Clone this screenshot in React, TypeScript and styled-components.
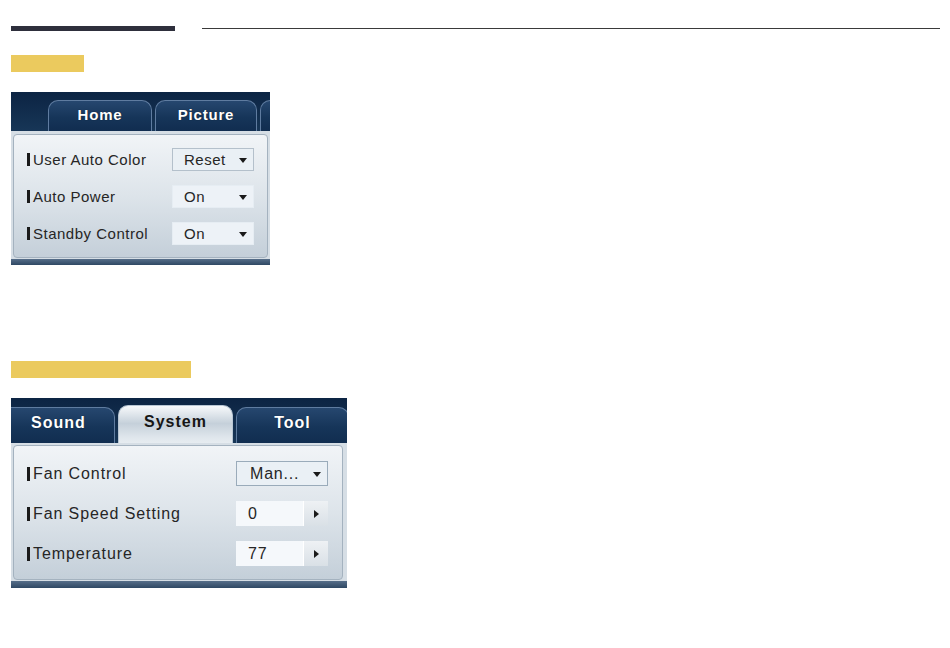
import React from "react";
import styled, { createGlobalStyle, css } from "styled-components";

const GlobalStyle = createGlobalStyle`
  html, body {
    margin: 0;
    padding: 0;
    background: #ffffff;
    font-family: "Liberation Sans", Arial, sans-serif;
  }
`;

type Field = { kind: "select" | "spin"; value: string; plain?: boolean };
type Row = { label: string; field: Field };

const firstRows: Row[] = [
  { label: "User Auto Color", field: { kind: "select", value: "Reset" } },
  { label: "Auto Power", field: { kind: "select", value: "On", plain: true } },
  { label: "Standby Control", field: { kind: "select", value: "On", plain: true } }
];

const secondRows: Row[] = [
  { label: "Fan Control", field: { kind: "select", value: "Man..." } },
  { label: "Fan Speed Setting", field: { kind: "spin", value: "0" } },
  { label: "Temperature", field: { kind: "spin", value: "77" } }
];

const App = () => {
  return (
    <Page>
      <GlobalStyle />
      <Header>
        <HeaderBar />
        <HeaderLine />
      </Header>

      <Marker $width={73} $top={24} />
      <Panel $width={259}>
        <TabBar $big={false}>
          <TabStrip $offset={37}>
            <Tab $big={false} $width={104}>Home</Tab>
            <Tab $big={false} $width={102}>Picture</Tab>
            <Tab $big={false} $width={100} />
          </TabStrip>
        </TabBar>
        <Body $big={false}>
          <Content $big={false}>
            {firstRows.map(row => (
              <SettingRow key={row.label} row={row} big={false} />
            ))}
          </Content>
        </Body>
        <BottomStrip $big={false} />
      </Panel>

      <Marker $width={180} $top={96} />
      <Panel $width={336}>
        <TabBar $big>
          <TabStrip $offset={-9}>
            <Tab $big $width={113}>Sound</Tab>
            <Tab $big $width={115} $active>
              System
            </Tab>
            <Tab $big $width={113}>Tool</Tab>
          </TabStrip>
        </TabBar>
        <Body $big>
          <Content $big>
            {secondRows.map(row => (
              <SettingRow key={row.label} row={row} big />
            ))}
          </Content>
        </Body>
        <BottomStrip $big />
      </Panel>
    </Page>
  );
};

const SettingRow = ({ row, big }: { row: Row; big: boolean }) => (
  <RowLine $big={big}>
    <Label $big={big}>
      <LabelMark $big={big} />
      {row.label}
    </Label>
    {row.field.kind === "select" ? (
      <Select $big={big} $plain={!!row.field.plain}>
        <span>{row.field.value}</span>
        <DownArrow />
      </Select>
    ) : (
      <Spin>
        <SpinValue>{row.field.value}</SpinValue>
        <SpinButton>
          <RightArrow />
        </SpinButton>
      </Spin>
    )}
  </RowLine>
);

const Page = styled.div`
  width: 950px;
  height: 648px;
  padding: 26px 10px 0 11px;
  box-sizing: border-box;
  overflow: hidden;
`;

const Header = styled.div`
  display: flex;
  align-items: center;
  gap: 27px;
  height: 5px;
`;

const HeaderBar = styled.div`
  width: 164px;
  height: 5px;
  background: #2e2f3c;
`;

const HeaderLine = styled.div`
  flex: 1;
  height: 1px;
  background: #3a3a3a;
`;

const Marker = styled.div<{ $width: number; $top: number }>`
  width: ${p => p.$width}px;
  height: 17px;
  margin-top: ${p => p.$top}px;
  margin-bottom: 20px;
  background: #ebca5e;
`;

const Panel = styled.div<{ $width: number }>`
  width: ${p => p.$width}px;
  display: flex;
  flex-direction: column;
  overflow: hidden;
  background: #dbe2e8;
`;

const TabBar = styled.div<{ $big: boolean }>`
  height: ${p => (p.$big ? 45 : 39)}px;
  display: flex;
  align-items: flex-end;
  background: linear-gradient(#0c2443, #173657);
  overflow: hidden;
`;

const TabStrip = styled.div<{ $offset: number }>`
  display: flex;
  align-items: flex-end;
  gap: 3px;
  margin-left: ${p => p.$offset}px;
  flex-shrink: 0;
`;

const Tab = styled.div<{ $big: boolean; $width: number; $active?: boolean }>`
  width: ${p => p.$width}px;
  height: ${p => (p.$big ? 36 : 31)}px;
  box-sizing: border-box;
  display: flex;
  align-items: center;
  justify-content: center;
  flex-shrink: 0;
  border: 1px solid #5f7ca0;
  border-bottom: none;
  border-radius: 10px 10px 0 0;
  background: linear-gradient(#26476f, #163559 55%, #112d50);
  color: #ffffff;
  font-weight: bold;
  font-size: ${p => (p.$big ? 16 : 15)}px;
  letter-spacing: ${p => (p.$big ? 1 : 0.8)}px;
  padding-bottom: ${p => (p.$big ? 6 : 3)}px;
  text-shadow: 0 0 1px rgba(0, 0, 0, 0.6);
  ${p =>
    p.$active &&
    css`
      height: 40px;
      padding-bottom: 8px;
      border-color: #b8c6d3;
      background: linear-gradient(#f7f9fb, #c5d0da 45%, #dfe6ec 80%, #e9eef2);
      color: #161616;
      text-shadow: none;
      margin-bottom: -2px;
    `}
`;

const Body = styled.div<{ $big: boolean }>`
  padding: ${p => (p.$big ? "2px 4px 1px 2px" : "3px 2px 1px 2px")};
  background: #d6dee5;
`;

const Content = styled.div<{ $big: boolean }>`
  display: flex;
  flex-direction: column;
  gap: ${p => (p.$big ? 15 : 14)}px;
  padding: ${p => (p.$big ? "15px 14px 13px 13px" : "13px 13px 12px 13px")};
  border: 1px solid #a4b2bf;
  border-radius: 4px;
  background: linear-gradient(#f1f4f7, #dde4ea 50%, #c4cfd9);
`;

const BottomStrip = styled.div<{ $big: boolean }>`
  height: ${p => (p.$big ? 7 : 6)}px;
  background: linear-gradient(#566e89, #2f4864);
`;

const RowLine = styled.div<{ $big: boolean }>`
  display: grid;
  grid-template-columns: 1fr ${p => (p.$big ? 92 : 82)}px;
  align-items: center;
  height: ${p => (p.$big ? 25 : 23)}px;
`;

const Label = styled.div<{ $big: boolean }>`
  display: flex;
  align-items: center;
  gap: 3px;
  color: #262626;
  font-size: ${p => (p.$big ? 16 : 15)}px;
  letter-spacing: ${p => (p.$big ? 0.9 : 0.5)}px;
  white-space: nowrap;
`;

const LabelMark = styled.span<{ $big: boolean }>`
  display: inline-block;
  width: 3px;
  height: ${p => (p.$big ? 14 : 13)}px;
  background: #1a1a1a;
`;

const Select = styled.div<{ $big: boolean; $plain: boolean }>`
  height: 100%;
  box-sizing: border-box;
  display: flex;
  align-items: center;
  justify-content: space-between;
  padding: ${p => (p.$big ? "0 6px 0 13px" : "0 6px 0 11px")};
  border: 1px solid ${p => (p.$plain ? "#e6edf3" : p.$big ? "#9aabba" : "#b4c0cb")};
  background: ${p => (p.$plain ? "#edf2f7" : "#eaf0f5")};
  color: #262626;
  font-size: ${p => (p.$big ? 16 : 15)}px;
  letter-spacing: ${p => (p.$big ? 0.8 : 0.5)}px;
`;

const DownArrow = styled.span`
  width: 0;
  height: 0;
  border-left: 4px solid transparent;
  border-right: 4px solid transparent;
  border-top: 5px solid #1a1a1a;
  margin-top: 1px;
`;

const Spin = styled.div`
  height: 100%;
  display: flex;
  font-size: 16px;
  letter-spacing: 0.8px;
  color: #262626;
`;

const SpinValue = styled.div`
  flex: 1;
  display: flex;
  align-items: center;
  padding-left: 12px;
  background: #f5f8fb;
`;

const SpinButton = styled.div`
  width: 24px;
  display: flex;
  align-items: center;
  justify-content: center;
  background: linear-gradient(#eef1f4, #d9e0e6);
  border-left: 1px solid #ffffff;
`;

const RightArrow = styled.span`
  width: 0;
  height: 0;
  border-top: 4px solid transparent;
  border-bottom: 4px solid transparent;
  border-left: 5px solid #1a1a1a;
`;

export default App;
